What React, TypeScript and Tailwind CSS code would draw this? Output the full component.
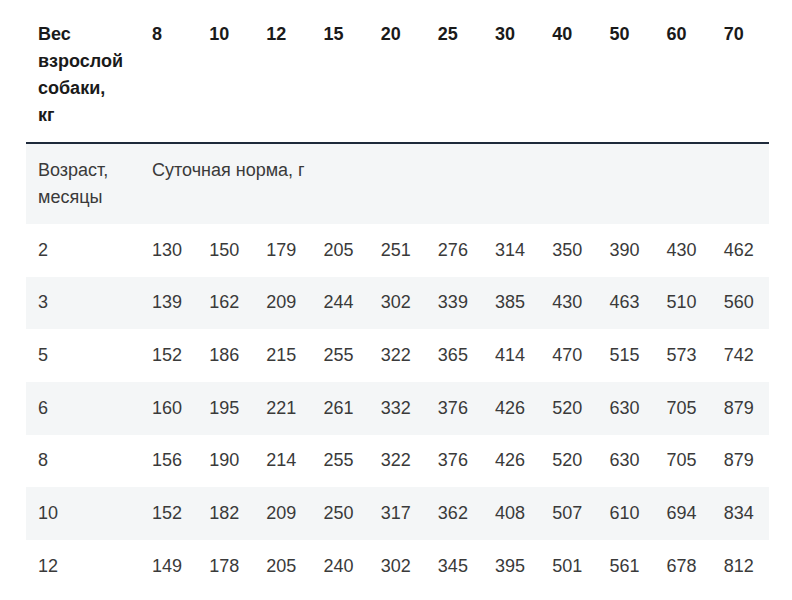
import React from "react";

const weights = ["8", "10", "12", "15", "20", "25", "30", "40", "50", "60", "70"];
const rows: [string, string[]][] = [
  ["2", ["130", "150", "179", "205", "251", "276", "314", "350", "390", "430", "462"]],
  ["3", ["139", "162", "209", "244", "302", "339", "385", "430", "463", "510", "560"]],
  ["5", ["152", "186", "215", "255", "322", "365", "414", "470", "515", "573", "742"]],
  ["6", ["160", "195", "221", "261", "332", "376", "426", "520", "630", "705", "879"]],
  ["8", ["156", "190", "214", "255", "322", "376", "426", "520", "630", "705", "879"]],
  ["10", ["152", "182", "209", "250", "317", "362", "408", "507", "610", "694", "834"]],
  ["12", ["149", "178", "205", "240", "302", "345", "395", "501", "561", "678", "812"]],
];

export default function App() {
  return (
    <div
      className="w-[792px] h-[600px] bg-white overflow-hidden pt-[9px] pl-[26px]"
      style={{ fontFamily: '"Liberation Sans", Arial, sans-serif' }}
    >
      <table className="table-fixed w-[743px] border-collapse text-[18px] leading-[27px]">
        <colgroup>
          <col className="w-[114px]" />
          {weights.map((w) => (
            <col key={w} />
          ))}
        </colgroup>
        <thead>
          <tr className="border-b-2 border-[#1e2a3b]">
            <th className="text-left align-top font-bold text-[#1a1a1a] px-3 pt-3 pb-[13px]">
              Вес
              <br />
              взрослой
              <br />
              собаки,
              <br />
              кг
            </th>
            {weights.map((w) => (
              <th key={w} className="text-left align-top font-bold text-[#1a1a1a] px-3 pt-3 pb-[13px]">
                {w}
              </th>
            ))}
          </tr>
        </thead>
        <tbody>
          <tr className="bg-[#f4f6f7]">
            <td className="align-top text-[#3a3a3a] px-3 py-[13px]">Возраст, месяцы</td>
            <td colSpan={11} className="align-top text-[#3a3a3a] px-3 py-[13px]">
              Суточная норма, г
            </td>
          </tr>
          {rows.map(([age, vals], i) => (
            <tr key={age} className={i % 2 === 0 ? "bg-white" : "bg-[#f4f6f7]"}>
              <td className="text-[#3a3a3a] px-3 py-[12.83px]">{age}</td>
              {vals.map((v, j) => (
                <td key={j} className="text-[#3a3a3a] px-3 py-[12.83px] whitespace-nowrap">
                  {v}
                </td>
              ))}
            </tr>
          ))}
        </tbody>
      </table>
    </div>
  );
}
